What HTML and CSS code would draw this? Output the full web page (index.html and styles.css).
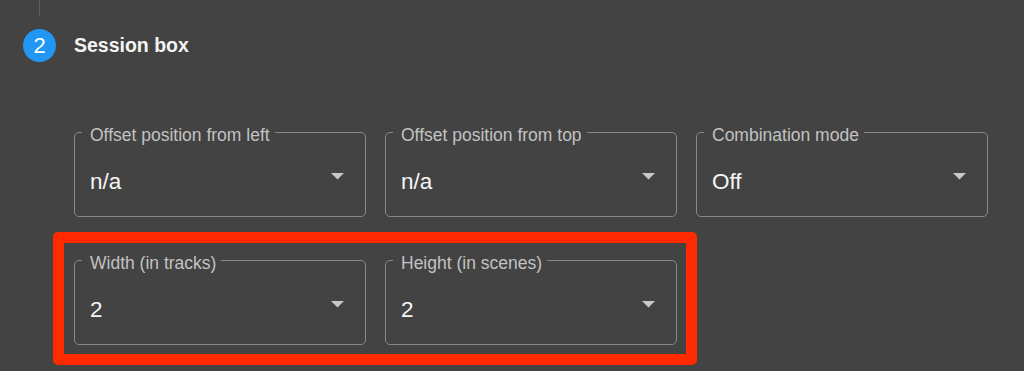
FILE: index.html
```html
<!DOCTYPE html>
<html lang="en">
<head>
<meta charset="utf-8">
<title>Session box</title>
<link rel="stylesheet" href="styles.css">
</head>
<body>
<div class="rail"></div>
<div class="step">
  <span class="badge">2</span>
  <span class="step-title">Session box</span>
</div>
<div class="fields">
  <div class="row">
    <fieldset class="select">
      <legend>Offset position from left</legend>
      <div class="value-row"><span class="value">n/a</span><svg class="arrow" width="13" height="7" viewBox="0 0 13 7"><polygon points="0,0 13,0 6.5,6.5"/></svg></div>
    </fieldset>
    <fieldset class="select">
      <legend>Offset position from top</legend>
      <div class="value-row"><span class="value">n/a</span><svg class="arrow" width="13" height="7" viewBox="0 0 13 7"><polygon points="0,0 13,0 6.5,6.5"/></svg></div>
    </fieldset>
    <fieldset class="select">
      <legend>Combination mode</legend>
      <div class="value-row"><span class="value">Off</span><svg class="arrow" width="13" height="7" viewBox="0 0 13 7"><polygon points="0,0 13,0 6.5,6.5"/></svg></div>
    </fieldset>
  </div>
  <div class="highlight">
    <fieldset class="select">
      <legend>Width (in tracks)</legend>
      <div class="value-row"><span class="value">2</span><svg class="arrow" width="13" height="7" viewBox="0 0 13 7"><polygon points="0,0 13,0 6.5,6.5"/></svg></div>
    </fieldset>
    <fieldset class="select">
      <legend>Height (in scenes)</legend>
      <div class="value-row"><span class="value">2</span><svg class="arrow" width="13" height="7" viewBox="0 0 13 7"><polygon points="0,0 13,0 6.5,6.5"/></svg></div>
    </fieldset>
  </div>
</div>
</body>
</html>
```
FILE: styles.css
```css
html, body {
  margin: 0;
  padding: 0;
}
body {
  background: #434343;
  font-family: "Liberation Sans", Arial, sans-serif;
  color: #f2f2f2;
  width: 1024px;
  height: 371px;
  overflow: hidden;
}
.rail {
  width: 1px;
  height: 16px;
  margin-left: 39px;
  background: #5e5e5e;
}
.step {
  display: flex;
  align-items: center;
  margin-top: 13px;
  margin-left: 23px;
}
.badge {
  width: 33px;
  height: 33px;
  border-radius: 50%;
  background: #2196f3;
  color: #fff;
  font-size: 22px;
  line-height: 33px;
  text-align: center;
}
.step-title {
  margin-left: 18px;
  font-size: 19.5px;
  font-weight: bold;
  color: #f4f4f4;
}
.fields {
  margin-top: 58px;
  margin-left: 53px;
}
.row {
  display: flex;
  gap: 19px;
  padding-left: 21px;
}
.highlight {
  display: inline-flex;
  gap: 19px;
  margin-top: 15px;
  border: 11px solid #ff2a00;
  border-radius: 5px;
  padding: 5px 9px 9px 10px;
}
.select {
  margin: 0;
  width: 292px;
  min-width: 0;
  box-sizing: border-box;
  border: 1px solid #8a8a8a;
  border-radius: 5px;
  padding: 0 21px 0 7px;
}
.select legend {
  padding: 6px 5px 0 8px;
  font-size: 17.5px;
  line-height: 18px;
  color: #c2c2c2;
}
.value-row {
  display: flex;
  justify-content: space-between;
  align-items: flex-start;
  height: 72px;
  box-sizing: border-box;
  padding: 25px 0 0 8px;
}
.value {
  font-size: 22.5px;
  line-height: 26px;
  color: #f5f5f5;
}
.arrow {
  margin-top: 4px;
  fill: #c8c8c8;
}
```
